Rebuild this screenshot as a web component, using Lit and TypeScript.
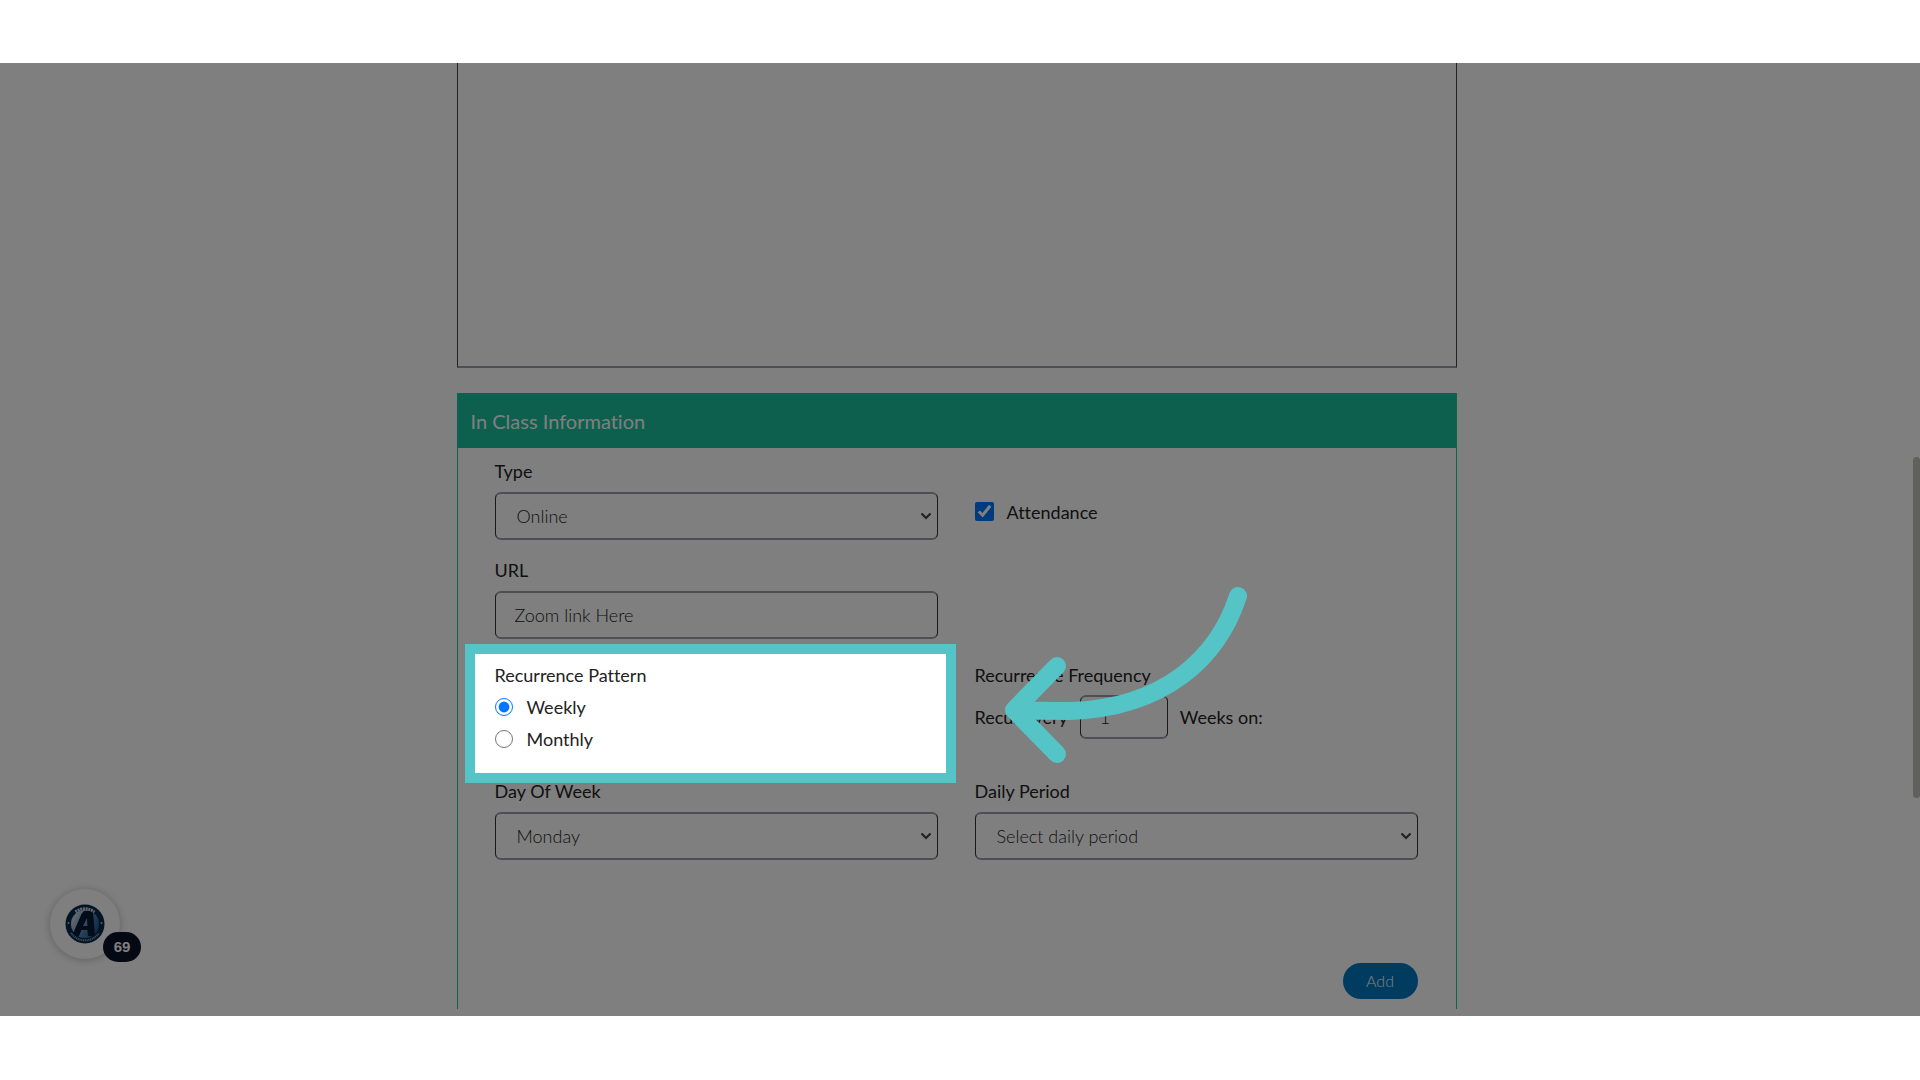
import { LitElement, html, css } from "lit";
import { customElement } from "lit/decorators.js";

@customElement("app-root")
export class AppRoot extends LitElement {
  static styles = css`
    :host { display: block; background: #fff; padding: 63px 0; font-family: Lato, "Liberation Sans", sans-serif; font-size: 18px; line-height: 24px; font-variant-ligatures: none; color: #222; }
    * { box-sizing: border-box; }
    .stage { position: relative; overflow: hidden; padding: 0 7px 7px 0; background: #fff; }
    .column { max-width: 1000px; margin: 0 auto; display: flex; flex-direction: column; gap: 25px; }
    .notes { display: block; width: 100%; height: 305px; border: 1px solid #444; border-top: 0; border-bottom: 2px solid #9f9fa6; resize: none; background: #fff; }
    .card { border: 1px solid #1cc8a2; border-bottom: 0; }
    .title { margin: 0; padding: 0 13px; background: #1cc09c; color: #fff; font-weight: 400; font-size: 20px; line-height: 54px; }
    .body { display: grid; grid-template-columns: 1fr 1fr; column-gap: 37px; padding: 11px 38px 10px 37px; }
    .field { display: flex; flex-direction: column; gap: 9px; height: 99px; }
    .control { width: 100%; height: 48px; border: 2px solid #9f9fa6; border-left: 1px solid #333; border-right: 1px solid #333; border-radius: 6px; background: #fff; padding: 0 19px; font: inherit; font-weight: 300; color: #222; }
    .picker { position: relative; display: block; }
    .picker .control { appearance: none; padding: 0 21px; }
    .chevron { position: absolute; right: 6px; top: 19px; width: 12px; height: 10px; }
    .check { display: flex; align-items: center; gap: 13px; height: 99px; padding-top: 6px; }
    input[type="checkbox"] { width: 19px; height: 19px; margin: 0; accent-color: #0075ff; }
    input[type="radio"] { width: 18px; height: 18px; margin: 0; accent-color: #0075ff; }
    .group { position: relative; border: 0; margin: 6px 0 0; padding: 0; min-width: 0; height: 116px; display: flex; flex-direction: column; gap: 8px; }
    .option { display: flex; align-items: center; gap: 14px; }
    .every { display: flex; align-items: center; gap: 12px; }
    .count { width: 88px; height: 44px; }
    .spot { position: absolute; z-index: 2; inset: -19px -18px -4px -30px; border: 10px solid #54c4c7; box-shadow: 0 0 0 4000px rgba(0, 0, 0, 0.5); pointer-events: none; }
    .actions { grid-column: 1 / -1; display: flex; justify-content: flex-end; padding-top: 85px; }
    .add { width: 75px; height: 36px; border: 0; border-radius: 18px; background: #0079c1; color: #fff; font: inherit; font-size: 16px; font-weight: 300; }
    .arrow { position: absolute; z-index: 4; left: 1000px; top: 517px; width: 260px; height: 190px; }
    .thumb { position: absolute; z-index: 3; right: 0; top: 394px; width: 7px; height: 341px; border-radius: 4px; background: #60605f; }
    .chat { position: absolute; left: 50px; top: 826px; width: 70px; height: 70px; padding: 15px; border: 0; border-radius: 50%; background: #fff; box-shadow: 0 1px 8px rgba(0, 0, 0, 0.25); }
    .logo { display: block; width: 40px; height: 40px; }
    .badge { position: absolute; left: 53px; top: 43px; width: 38px; height: 30px; border-radius: 15px; background: #0b1228; color: #fff; font: bold 15px/30px "Liberation Sans", sans-serif; }
  `;

  private picker(id: string, label: string, value: string) {
    return html`<div class="field">
      <label for=${id}>${label}</label>
      <span class="picker">
        <select class="control" id=${id}><option>${value}</option></select>
        <svg class="chevron" viewBox="0 0 12 10" aria-hidden="true"><path d="M1.5 2.5 6 7l4.5-4.5" fill="none" stroke="#444" stroke-width="2.2" /></svg>
      </span>
    </div>`;
  }

  render() {
    return html`<main class="stage">
      <div class="column">
        <textarea class="notes" aria-label="Description"></textarea>
        <section class="card">
          <h2 class="title">In Class Information</h2>
          <form class="body">
            ${this.picker("type", "Type", "Online")}
            <div class="check"><input type="checkbox" id="attendance" checked /><label for="attendance">Attendance</label></div>
            <div class="field">
              <label for="url">URL</label>
              <input class="control" id="url" type="text" value="Zoom link Here" />
            </div>
            <div></div>
            <div class="group" role="radiogroup" aria-labelledby="pattern">
              <span id="pattern">Recurrence Pattern</span>
              <label class="option"><input type="radio" name="pattern" checked />Weekly</label>
              <label class="option"><input type="radio" name="pattern" />Monthly</label>
              <div class="spot"></div>
            </div>
            <div class="group">
              <span>Recurrence Frequency</span>
              <div class="every"><label for="count">Recur every</label><input class="control count" id="count" type="text" value="1" /><span>Weeks on:</span></div>
            </div>
            ${this.picker("day", "Day Of Week", "Monday")}
            ${this.picker("period", "Daily Period", "Select daily period")}
            <div class="actions"><button class="add" type="button">Add</button></div>
          </form>
        </section>
      </div>
      <button class="chat" aria-label="Help">
        <svg class="logo" viewBox="0 0 40 40" aria-hidden="true">
          <defs><linearGradient id="disc" x1="0" y1="0" x2="1" y2="0.6"><stop offset="0.2" stop-color="#c3cddd" /><stop offset="0.7" stop-color="#4f7db0" /><stop offset="1" stop-color="#23588c" /></linearGradient></defs>
          <circle cx="20" cy="20" r="19.5" fill="#062a48" />
          <circle cx="20" cy="20" r="14" fill="url(#disc)" />
          <path d="M19 7h9l2 25h-7l-.5-6h-6L14 32H7L16.500 10zm3 7-4 8h4.500z" fill="#031d35" />
          <path d="M10.500 8A15.500 15.500 0 0 1 29.500 8" fill="none" stroke="#c8d3de" stroke-width="3" stroke-dasharray="2 .7" />
          <path d="M6 29A17 17 0 0 0 34 29" fill="none" stroke="#8fa5ba" stroke-width="2" stroke-dasharray="1 .8" />
          <circle cx="3.500" cy="19" r="1" fill="#a9bccd" /><circle cx="36.500" cy="19" r="1" fill="#a9bccd" />
        </svg>
        <span class="badge">69</span>
      </button>
      <div class="thumb"></div>
      <svg class="arrow" viewBox="0 0 260 190" aria-hidden="true">
        <path d="M238 16C218 78 164 128 70 131Q40 131 14 130M57 86 14 130l43 44" fill="none" stroke="#54c4c7" stroke-width="18" stroke-linecap="round" stroke-linejoin="round" />
      </svg>
    </main>`;
  }
}
